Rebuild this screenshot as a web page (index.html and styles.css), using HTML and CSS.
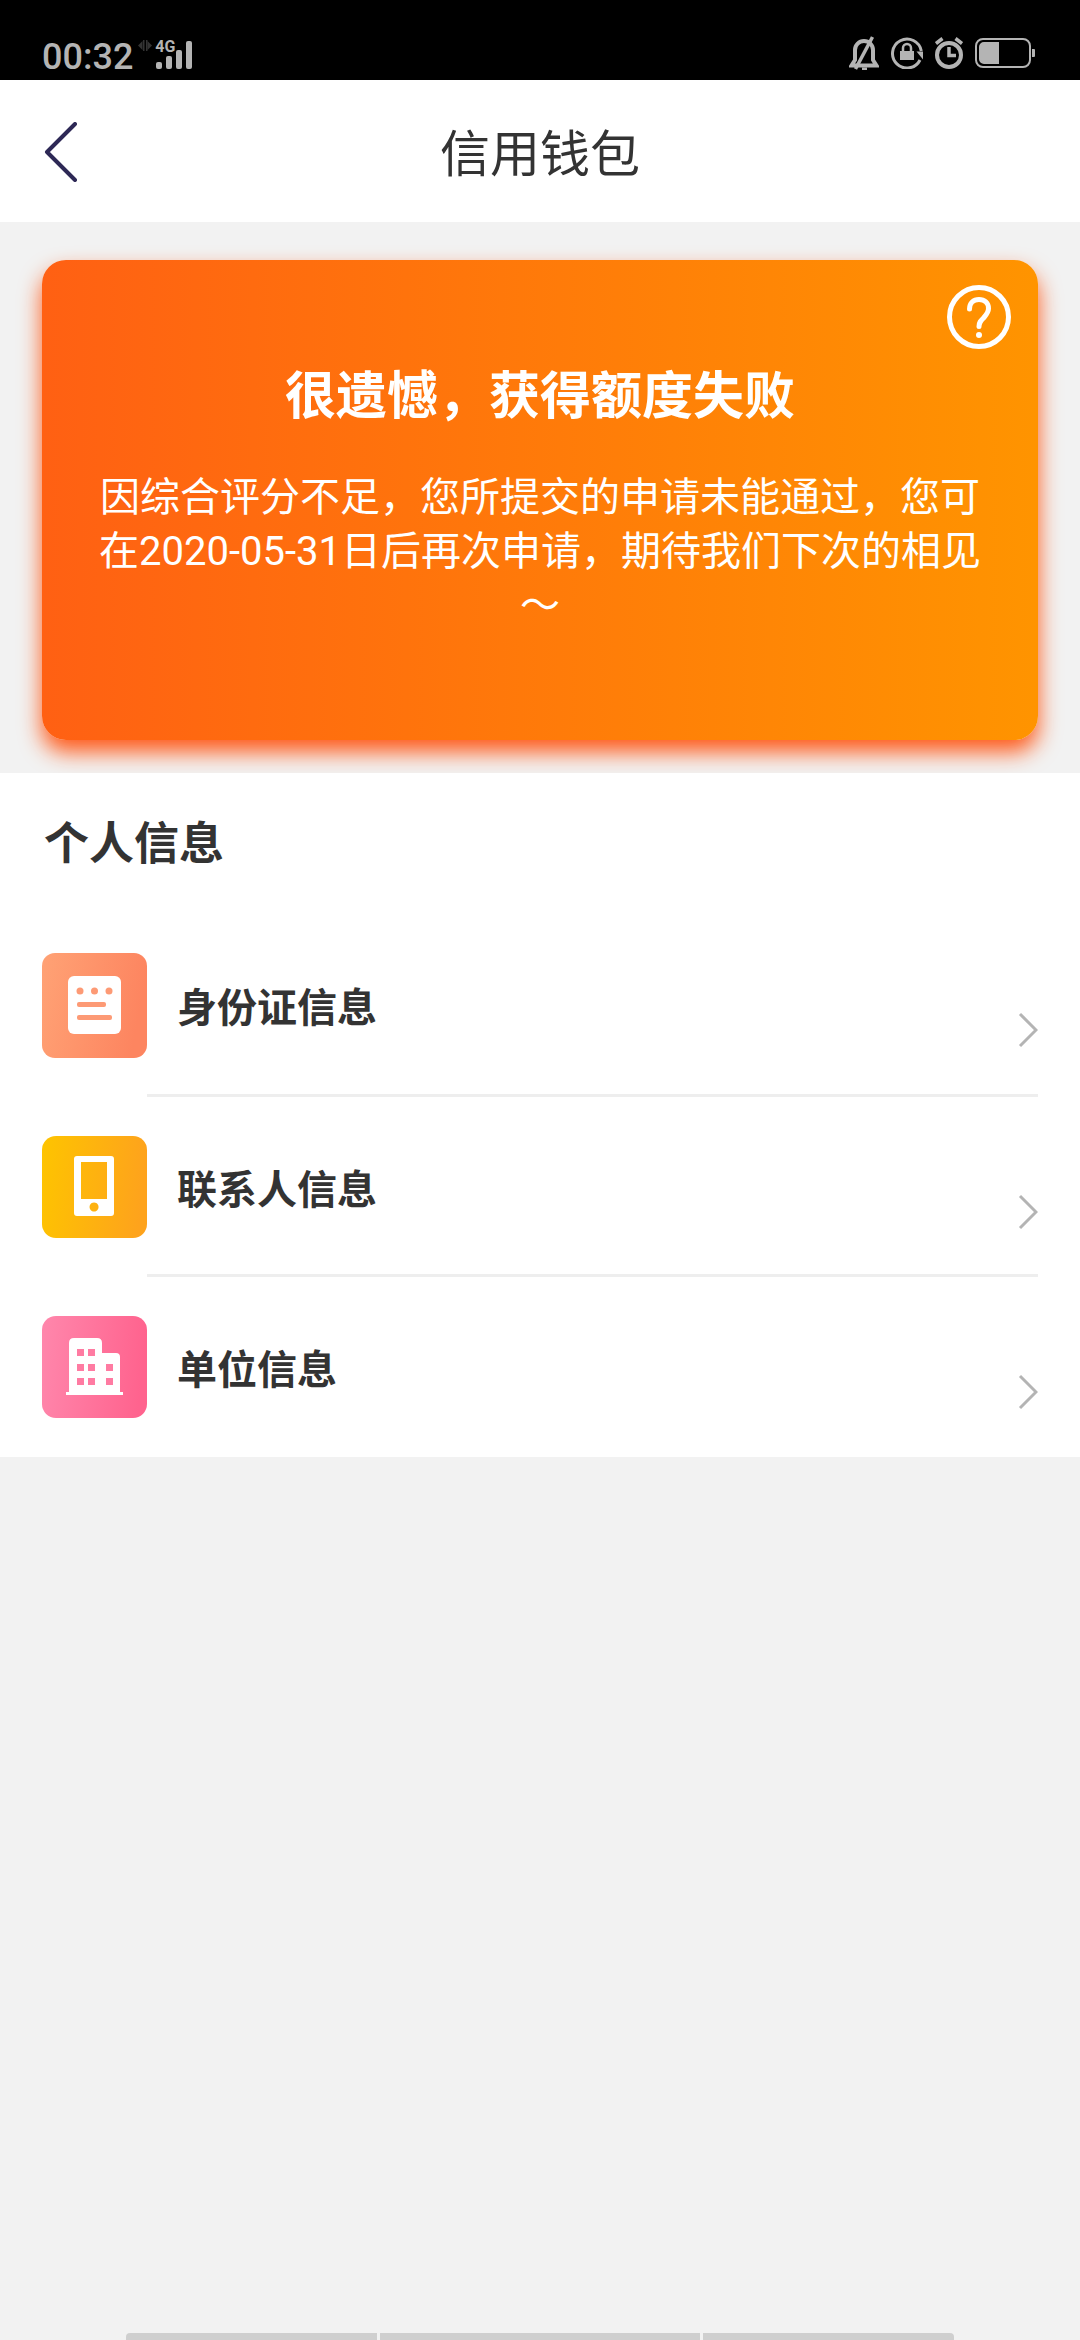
FILE: index.html
```html
<!DOCTYPE html>
<html lang="zh-CN">
<head>
<meta charset="utf-8">
<meta name="viewport" content="width=device-width, initial-scale=1">
<title>信用钱包</title>
<link rel="stylesheet" href="styles.css">
</head>
<body>
<div class="status">
  <div class="status-left">
    <span class="clock">00:32</span>
    <svg class="data" width="14" height="12" viewBox="0 0 14 12"><path d="M0 5.500l4.500-4.500v9zM14 5.500l-4.500-4.500v9z"/><path d="M5 0h1.500v11H5zM8 0h1.500v11H8z"/></svg>
    <span class="signal">
      <svg width="38" height="30" viewBox="0 0 38 30"><rect x="1" y="22" width="6" height="7" rx="2"/><rect x="11" y="16" width="6" height="13" rx="2"/><rect x="21" y="10" width="6" height="19" rx="2"/><rect x="31" y="1" width="6" height="28" rx="2"/></svg>
      <span class="network">4G</span>
    </span>
  </div>
  <div class="status-right">
    <svg width="30" height="34" viewBox="0 0 30 34" fill="none" stroke="currentColor" stroke-width="4"><path d="M6 24V14a9 9 0 0 1 18 0v10l3.500 5.500H2.500z"/><path d="M23.500 1L6.500 33" stroke-width="3.500"/><path d="M13 33h5" stroke-width="3"/></svg>
    <svg width="32" height="32" viewBox="0 0 32 32"><path d="M29 23A14.500 14.500 0 1 1 30.300 14" fill="none" stroke="currentColor" stroke-width="3"/><path d="M25.500 14.500H32v8z"/><path d="M9 14h14v9H9z"/><path d="M12 14v-3a4 4 0 0 1 8 0v3" fill="none" stroke="currentColor" stroke-width="2.500"/></svg>
    <svg width="28" height="32" viewBox="0 0 28 32" fill="none" stroke="currentColor"><circle cx="14" cy="18" r="12" stroke-width="4"/><path d="M14 10v8.500h7" stroke-width="3.500"/><path d="M1 6.500l6.500-5M27 6.500l-6.500-5" stroke-width="3.500"/></svg>
    <svg class="battery" width="60" height="30" viewBox="0 0 60 30"><rect x="1" y="1" width="54" height="28" rx="7" fill="none" stroke="currentColor" stroke-width="2"/><path d="M24 4v22H9a5 5 0 0 1-5-5V9a5 5 0 0 1 5-5zM57 11h2a1 1 0 0 1 1 1v6a1 1 0 0 1-1 1h-2z"/></svg>
  </div>
</div>

<header class="topbar">
  <button class="back" type="button" aria-label="返回">
    <svg width="34" height="60" viewBox="0 0 34 60" fill="none" stroke="currentColor" stroke-width="4" stroke-linecap="round" stroke-linejoin="round"><path d="M31 2L3 30l28 28"/></svg>
  </button>
  <h1 class="topbar-title">信用钱包</h1>
</header>

<main>
  <section class="hero">
    <div class="card">
      <button class="help" type="button" aria-label="帮助">
        <svg width="64" height="64" viewBox="0 0 64 64" fill="none" stroke="currentColor" stroke-linecap="round"><circle cx="32" cy="32" r="29.500" stroke-width="5"/><path d="M22.500 24c0-6 4-9.500 9.500-9.500s9.500 3.500 9.500 9c0 4-2 6-5 9.500-3 3-4.500 4.500-4.500 8.500" stroke-width="5"/><circle cx="32" cy="50" r="3" fill="currentColor" stroke="none"/></svg>
      </button>
      <h2 class="card-title">很遗憾，获得额度失败</h2>
      <p class="card-text">因综合评分不足，您所提交的申请未能通过，您可在2020-05-31日后再次申请，期待我们下次的相见～</p>
    </div>
  </section>

  <section class="info">
    <h2 class="info-title">个人信息</h2>
    <ul class="list">
      <li><a class="item" href="#id">
        <svg class="item-icon" width="105" height="105" viewBox="0 0 105 105">
          <defs><linearGradient id="g1" x2="1" y2="0.2"><stop stop-color="#ffa275"/><stop offset="1" stop-color="#fd8560"/></linearGradient></defs>
          <rect width="105" height="105" rx="13" fill="url(#g1)"/>
          <rect x="26" y="23" width="53" height="58" rx="6" fill="#fff"/>
          <g fill="#fd9a75"><circle cx="38" cy="38" r="3.500"/><circle cx="52.500" cy="38" r="3.500"/><circle cx="67" cy="38" r="3.500"/><rect x="35" y="49" width="29" height="5" rx="2"/><rect x="35" y="62" width="35" height="5" rx="2"/></g>
        </svg>
        <span class="item-body"><span class="item-label">身份证信息</span><svg class="chevron" width="20" height="36" viewBox="0 0 20 36"><path d="M2 2l16 16L2 34"/></svg></span>
      </a></li>
      <li><a class="item" href="#contact">
        <svg class="item-icon" width="105" height="102" viewBox="0 0 105 102">
          <defs><linearGradient id="g2" x2="1" y2="0.1"><stop stop-color="#fec400"/><stop offset="1" stop-color="#fea31c"/></linearGradient></defs>
          <rect width="105" height="102" rx="14" fill="url(#g2)"/>
          <path fill="#fff" fill-rule="evenodd" d="M35 20h34q3 0 3 3v54q0 3-3 3H35q-3 0-3-3V23q0-3 3-3zM39 26v37h26V26zM52 66.500a4.500 4.500 0 1 0 .1 0z"/>
        </svg>
        <span class="item-body"><span class="item-label">联系人信息</span><svg class="chevron" width="20" height="36" viewBox="0 0 20 36"><path d="M2 2l16 16L2 34"/></svg></span>
      </a></li>
      <li><a class="item" href="#company">
        <svg class="item-icon" width="105" height="102" viewBox="0 0 105 102">
          <defs><linearGradient id="g3" x2="1" y2="0.1"><stop stop-color="#ff87ac"/><stop offset="1" stop-color="#ff638e"/></linearGradient></defs>
          <rect width="105" height="102" rx="14" fill="url(#g3)"/>
          <path fill="#fff" d="M27 76V27q0-5 5-5h23q5 0 5 5v10h14q4 0 4 4v35h3v3H24v-3z"/>
          <path fill="#ff7ba2" d="M35 33h7v7h-7zM46 33h7v7h-7zM35 48h7v7h-7zM46 48h7v7h-7zM64 48h7v7h-7zM35 62h7v7h-7zM46 62h7v7h-7zM64 62h7v7h-7z"/>
        </svg>
        <span class="item-body"><span class="item-label">单位信息</span><svg class="chevron" width="20" height="36" viewBox="0 0 20 36"><path d="M2 2l16 16L2 34"/></svg></span>
      </a></li>
    </ul>
  </section>
</main>

<div class="gesture"><span></span><span class="wide"></span><span></span></div>
</body>
</html>
```
FILE: styles.css
```css
* { box-sizing: border-box; }
body {
  margin: 0;
  min-height: 100vh;
  display: flex;
  flex-direction: column;
  background: #f2f2f2;
  color: #333;
  font-family: Roboto, "Noto Sans CJK SC", sans-serif;
}
h1, h2, p, ul { margin: 0; padding: 0; }
ul { list-style: none; }
svg { display: block; flex: none; }
button { padding: 0; border: 0; background: none; color: inherit; }
a { color: inherit; text-decoration: none; }

.status {
  display: flex;
  justify-content: space-between;
  align-items: flex-end;
  height: 80px;
  padding: 0 45px 10px 42px;
  background: #000;
  color: #b4b4b4;
}
.status svg { fill: currentColor; }
.status svg[fill="none"] { fill: none; }
.status-left, .status-right { display: flex; }
.clock { font-size: 36px; line-height: 34px; font-weight: 500; }
.status-left { align-items: flex-start; height: 30px; }
.status .data { margin: 0 3px 0 5px; fill: #333; }
.signal { position: relative; }
.network {
  position: absolute;
  left: 0;
  top: 0;
  font-size: 16px;
  line-height: 14px;
  font-weight: 700;
}
.status-right { align-items: center; gap: 12px; }

.topbar {
  display: grid;
  grid-template-columns: 34px 1fr 34px;
  align-items: center;
  height: 142px;
  padding: 2px 44px 0;
  background: #fff;
}
.back { color: #2d2855; }
.topbar-title {
  padding-top: 6px;
  font-size: 50px;
  line-height: 70px;
  font-weight: 400;
  text-align: center;
}

.hero { padding: 38px 42px 33px; }
.card {
  position: relative;
  min-height: 480px;
  padding: 101px 56px 0;
  border-radius: 24px;
  background: linear-gradient(90deg, #ff6013, #ff9400);
  box-shadow: 0 12px 22px #ff5a1a;
  color: #fff;
  text-align: center;
}
.help { position: absolute; top: 25px; right: 27px; }
.card-title { font-size: 51px; line-height: 72px; font-weight: 700; }
.card-text { margin-top: 38px; font-size: 40px; line-height: 54px; }

.info { position: relative; background: #fff; }
.info-title {
  padding: 3px 44px 0;
  font-size: 45px;
  line-height: 138px;
  font-weight: 700;
}
.item { display: flex; padding: 0 42px; }
.item-icon { margin: 39px 0; }
.item-body {
  flex: 1;
  display: flex;
  justify-content: space-between;
  align-items: center;
  padding-left: 30px;
  border-bottom: 3px solid #eee;
}
li:last-child .item-body { border-bottom-color: transparent; }
.item-label { padding-top: 10px; font-size: 40px; line-height: 56px; font-weight: 700; }
.chevron {
  margin-top: 52px;
  fill: none;
  stroke: #b4b4b4;
  stroke-width: 3;
}

.gesture {
  display: flex;
  justify-content: center;
  gap: 3px;
  margin-top: auto;
  padding: 0 126px;
}
.gesture span { flex: 250; height: 7px; background: #cfcfcf; }
.gesture .wide { flex: 320; }
.gesture span:first-child { border-top-left-radius: 4px; }
.gesture span:last-child { border-top-right-radius: 4px; }
```
